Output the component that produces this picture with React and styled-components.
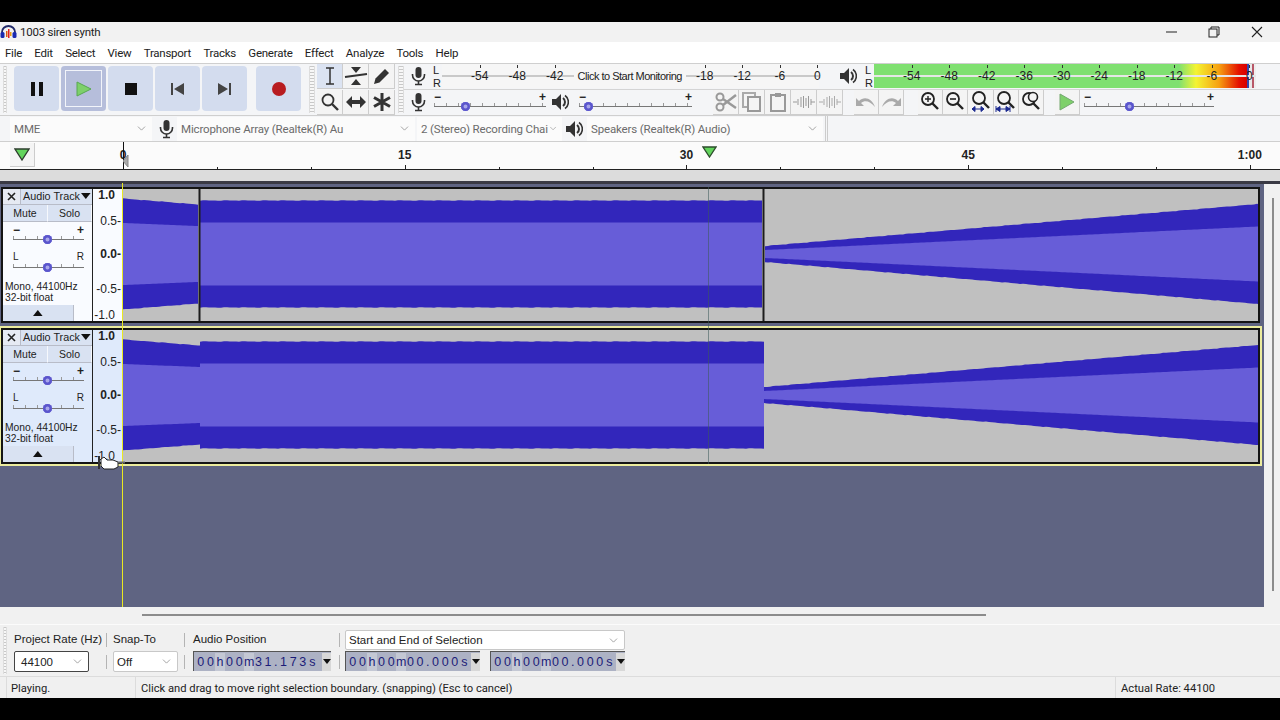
import React from "react";
import styled, { createGlobalStyle } from "styled-components";
import { ChevronDown } from "lucide-react";

const GlobalStyle = createGlobalStyle`
  html, body {
    margin: 0;
    padding: 0;
    background: #000;
  }
  * {
    box-sizing: border-box;
  }
`;

const Page = styled.div`
  width: 1280px;
  height: 720px;
  padding: 22px 0;
  background: #000;
  display: flex;
  flex-direction: column;
  overflow: hidden;
  font-family: "Liberation Sans", Arial, sans-serif;
  font-size: 12px;
  color: #222;
`;

const TitleBar = styled.div`
  height: 20px;
  flex: none;
  display: flex;
  align-items: center;
  background: #f2f2f2;
  font-family: Roboto, sans-serif;
  font-size: 11.5px;
  letter-spacing: -0.25px;
`;

const TitleText = styled.span`
  margin-left: 3px;
  flex: 1;
`;

const WinButton = styled.div`
  width: 16px;
  height: 16px;
  margin-right: 27px;
  display: flex;
  align-items: center;
  justify-content: center;
  &:last-child {
    margin-right: 15px;
  }
`;

const MenuBar = styled.div`
  height: 21px;
  flex: none;
  display: flex;
  align-items: center;
  gap: 12.3px;
  padding-left: 5px;
  background: #fff;
  font-family: Roboto, sans-serif;
  font-size: 11.5px;
  letter-spacing: -0.25px;
`;

const ToolBlock = styled.div`
  height: 53px;
  flex: none;
  display: flex;
  background: #f4f5f7;
  border-top: 1px solid #cfcfcf;
  border-bottom: 1px solid #cfcfcf;
`;

const Grip = styled.div`
  width: ${(p) => p.$w || 7}px;
  flex: none;
  margin: ${(p) => p.$m || "2px 2px 2px 3px"};
  background: repeating-linear-gradient(to bottom, #c8c8c8 0 1px, #f7f7f7 1px 3px);
  border-left: 1px solid #ddd;
  border-right: 1px solid #ddd;
`;

const Transport = styled.div`
  display: flex;
  align-items: center;
  gap: 2px;
  width: 296px;
  flex: none;
  padding: 0 0 2px 5px;
`;

const TransportButton = styled.div`
  width: 45px;
  height: 45px;
  flex: none;
  border-radius: 4px;
  display: flex;
  align-items: center;
  justify-content: center;
  background: ${(p) => (p.$down ? "#b6bedb" : "#d3dcee")};
  margin-left: ${(p) => p.$gap || 0}px;
  box-shadow: ${(p) => (p.$down ? "inset 0 0 0 4px #b6bedb, inset 0 0 0 5px #f2f4fa" : "none")};
`;

const ToolGrid = styled.div`
  width: 78px;
  flex: none;
  display: grid;
  grid-template-columns: repeat(3, 26px);
  grid-auto-rows: 25px;
  row-gap: 1px;
  align-content: center;
`;

const ToolButton = styled.div`
  height: 25px;
  width: ${(p) => p.$w || 26}px;
  flex: none;
  display: flex;
  align-items: center;
  justify-content: center;
  background: ${(p) => (p.$on ? "#dbe3f2" : "#f4f4f4")};
  border-right: 1px solid #cdcdcd;
  border-bottom: 1px solid #cdcdcd;
  margin-left: ${(p) => p.$gap || 0}px;
`;

const ToolRows = styled.div`
  flex: 1;
  display: flex;
  flex-direction: column;
`;

const ToolRow = styled.div`
  height: 25.5px;
  display: flex;
  align-items: center;
  &:first-child {
    border-bottom: 1px solid #d4d4d4;
  }
`;

const MicSlot = styled.div`
  width: ${(p) => p.$w || 28}px;
  flex: none;
  display: flex;
  align-items: center;
  justify-content: center;
`;

const LeftRight = styled.div`
  width: 10px;
  height: 25px;
  flex: none;
  display: flex;
  flex-direction: column;
  justify-content: space-between;
  font-size: 11px;
  line-height: 12px;
  padding-left: 1px;
`;

const Scale = styled.div`
  height: 24px;
  flex: none;
  width: ${(p) => p.$w}px;
  display: flex;
  padding-left: 19px;
  background: ${(p) =>
    p.$live
      ? `linear-gradient(to bottom, transparent 11px, #e6e6e6 11px, #e6e6e6 13px, transparent 13px),
         linear-gradient(to right, #7fe070 0, #7fe070 305px, #f4f432 322px, #f6a010 345px, #e41000 365px, #d80000 373px, #3048b0 373px, #3048b0 375px, #e8e8e8 375px, #e8e8e8 378px, #b85868 378px, #b85868 380px, #eee 380px)`
      : "linear-gradient(to bottom, #f6f6f6 11px, #c9c9c9 11px, #c9c9c9 13px, #f6f6f6 13px)"};
`;

const ScaleCell = styled.div`
  width: 37.5px;
  flex: none;
  text-align: center;
  line-height: 24px;
  font-size: 12px;
  color: #222;
  position: relative;
  &::before {
    content: "";
    position: absolute;
    left: 50%;
    top: 1px;
    width: 1px;
    height: 3px;
    background: #333;
  }
`;

const ScaleMessage = styled.div`
  width: 112.5px;
  flex: none;
  text-align: center;
  line-height: 24px;
  font-size: 11px;
  letter-spacing: -0.5px;
  background: linear-gradient(to bottom, transparent 6px, #f6f6f6 6px, #f6f6f6 18px, transparent 18px);
  white-space: nowrap;
`;

const SliderBox = styled.div`
  width: ${(p) => p.$w}px;
  height: 24px;
  flex: none;
  position: relative;
  margin-left: ${(p) => p.$gap || 0}px;
`;

const SliderSign = styled.span`
  position: absolute;
  top: 0;
  font-size: 12px;
  font-weight: bold;
  line-height: 14px;
  ${(p) => (p.$right ? "right: 0;" : "left: 0;")}
`;

const SliderTrack = styled.div`
  position: absolute;
  left: 0;
  right: 0;
  top: ${(p) => p.$top ?? 13}px;
  height: 4px;
  border-bottom: 1px solid #777;
  background: repeating-linear-gradient(to right, #999 0 1px, transparent 1px 12px);
`;

const SliderThumb = styled.div`
  position: absolute;
  left: ${(p) => p.$at}px;
  top: ${(p) => p.$top ?? 12}px;
  width: 9px;
  height: 9px;
  border-radius: 50%;
  background: #5a55cc;
  box-shadow: inset 0 0 0 2.5px #5a55cc, inset 0 0 0 5px #a8a6ea;
`;

const DeviceBar = styled.div`
  height: 26px;
  flex: none;
  display: flex;
  align-items: center;
  background: #f4f5f7;
  border-bottom: 1px solid #cfcfcf;
`;

const Combo = styled.div`
  width: ${(p) => p.$w}px;
  flex: none;
  height: 24px;
  margin-left: ${(p) => p.$gap || 0}px;
  padding: 0 4px 0 4px;
  display: flex;
  align-items: center;
  justify-content: space-between;
  background: #fbfbfb;
  color: #6b6b6b;
  font-family: Roboto, sans-serif;
  font-size: 11.5px;
  letter-spacing: -0.15px;
  white-space: nowrap;
  overflow: hidden;
`;

const DeviceEnd = styled.div`
  width: 3px;
  height: 25px;
  margin-left: 2px;
  border-left: 1px solid #ccc;
  border-right: 1px solid #ccc;
`;

const TimelineBar = styled.div`
  height: 28px;
  flex: none;
  display: flex;
  background: #fbfbfb;
  border-bottom: 1px solid #222;
`;

const TimelineLeft = styled.div`
  width: 123px;
  flex: none;
  padding: 1px 0 0 10px;
`;

const LoopButton = styled.div`
  width: 25px;
  height: 24px;
  display: flex;
  align-items: center;
  justify-content: center;
  background: #f4f4f4;
  border-right: 1px solid #ccc;
  border-bottom: 1px solid #ccc;
`;

const Ruler = styled.div`
  flex: 1;
  display: flex;
  position: relative;
`;

const RulerCell = styled.div`
  width: 93.92px;
  flex: none;
  position: relative;
  &::after {
    content: "";
    position: absolute;
    left: 0;
    bottom: 0;
    width: 1px;
    height: ${(p) => (p.$major ? 4 : 2)}px;
    background: #222;
  }
`;

const RulerLabel = styled.span`
  position: absolute;
  left: -14px;
  width: 28px;
  top: 6px;
  text-align: center;
  font-weight: bold;
  font-size: 12px;
  color: #222;
`;

const PlayHead = styled.div`
  position: absolute;
  left: 0;
  top: 0;
  bottom: 0;
  width: 1px;
  background: #111;
`;

const HeadMark = styled.svg`
  position: absolute;
  left: 0;
  top: 12px;
`;

const EdgeMark = styled.svg`
  position: absolute;
  left: 579px;
  top: 4px;
`;

const ShelfGap = styled.div`
  height: 11px;
  flex: none;
  background: #dcdcdc;
`;

const ShelfEdge = styled.div`
  height: 3px;
  flex: none;
  background: #3a3a44;
`;

const TrackZone = styled.div`
  height: 423px;
  flex: none;
  display: flex;
`;

const TrackColumn = styled.div`
  width: 1264px;
  flex: none;
  padding: 3px 0 0 1px;
  background: #5f6482;
  position: relative;
`;

const TrackRow = styled.div`
  width: 1259px;
  height: 136px;
  display: flex;
  border: 2px solid #141414;
  margin-bottom: 5px;
  box-shadow: ${(p) => (p.$focus ? "0 0 0 2px #ecec9e" : "none")};
  background: ${(p) => (p.$focus ? "#dfeafb" : "#f9fbff")};
`;

const TrackPanel = styled.div`
  width: 90px;
  flex: none;
  border-right: 1px solid #222;
  display: flex;
  flex-direction: column;
`;

const PanelHead = styled.div`
  height: 16px;
  flex: none;
  display: flex;
`;

const CloseBox = styled.div`
  width: 18px;
  flex: none;
  display: flex;
  align-items: center;
  justify-content: center;
  background: #e6eaf3;
  border-right: 1px solid #b8bcc8;
  border-bottom: 1px solid #b8bcc8;
`;

const NameBox = styled.div`
  flex: 1;
  display: flex;
  align-items: center;
  justify-content: space-between;
  padding: 0 1px 2px 2px;
  font-size: 10.8px;
  background: #d9e2f2;
  border-bottom: 1px solid #b8bcc8;
  white-space: nowrap;
`;

const MuteRow = styled.div`
  height: 17px;
  flex: none;
  display: flex;
`;

const MuteButton = styled.div`
  width: ${(p) => p.$w}px;
  flex: none;
  display: flex;
  align-items: center;
  justify-content: center;
  font-size: 10.5px;
  background: #d9e2f2;
  border-right: 1px solid #f6f8fc;
  border-bottom: 1px solid #b8bcc8;
`;

const PanelSlider = styled.div`
  height: 28px;
  flex: none;
  margin-left: 10px;
  margin-top: ${(p) => p.$top || 0}px;
`;

const PanSide = styled.div`
  display: flex;
  justify-content: space-between;
  font-size: 10px;
  line-height: 12px;
  width: 71px;
`;

const InfoText = styled.div`
  margin: 2px 0 0 2px;
  font-size: 10.3px;
  line-height: 11px;
  white-space: nowrap;
`;

const CollapseButton = styled.div`
  width: 71px;
  height: 16px;
  margin-top: auto;
  display: flex;
  align-items: center;
  justify-content: center;
  background: #d9e2f2;
  border-right: 1px solid #b8bcc8;
`;

const VRuler = styled.div`
  width: 30px;
  flex: none;
  display: flex;
  flex-direction: column;
  align-items: flex-end;
  padding-right: 1px;
  border-right: 1px solid #222;
`;

const VLabel = styled.div`
  height: 14px;
  flex: none;
  margin-top: ${(p) => p.$gap}px;
  line-height: 14px;
  font-size: 12px;
  font-weight: ${(p) => (p.$bold ? "bold" : "normal")};
  padding-right: ${(p) => (p.$tick ? 0 : 6)}px;
  color: #222;
`;

const WaveArea = styled.div`
  flex: 1;
  position: relative;
  background: #c0c0c0;
  overflow: hidden;
`;

const WaveSvg = styled.svg`
  display: block;
`;

const InsertLine = styled.div`
  position: absolute;
  left: 122px;
  top: -1px;
  width: 1px;
  height: 424px;
  background: #e9e920;
  z-index: 2;
`;

const CursorLine = styled.div`
  position: absolute;
  left: 708px;
  top: 3px;
  width: 1px;
  height: 277px;
  background: rgba(60, 90, 90, 0.55);
  z-index: 2;
`;

const HandCursor = styled.svg`
  position: absolute;
  left: 98px;
  top: 272px;
  z-index: 3;
`;

const VScroll = styled.div`
  flex: 1;
  background: #f1f1f1;
  padding: 14px 0 0 8px;
`;

const VThumb = styled.div`
  width: 2px;
  height: 393px;
  background: #8c8c8c;
`;

const HScroll = styled.div`
  height: 17px;
  flex: none;
  background: #f1f1f1;
  padding: 7px 0 0 142px;
`;

const HThumb = styled.div`
  width: 844px;
  height: 2px;
  background: #8c8c8c;
`;

const SelectionBar = styled.div`
  height: 52px;
  flex: none;
  display: flex;
  background: #f0f0f0;
  border-top: 1px solid #fbfbfb;
`;

const Field = styled.div`
  width: ${(p) => p.$w}px;
  flex: none;
  display: flex;
  flex-direction: column;
  gap: 1px;
  padding-top: 5px;
  margin-left: ${(p) => p.$gap || 0}px;
`;

const FieldLabel = styled.div`
  height: 20px;
  line-height: 19px;
  font-size: 11.5px;
  white-space: nowrap;
`;

const SepStack = styled.div`
  width: 1px;
  flex: none;
  margin-left: ${(p) => p.$gap}px;
  padding-top: 8px;
  display: flex;
  flex-direction: column;
  gap: 8px;
`;

const SepLine = styled.div`
  height: 14px;
  background: #b4b4b4;
`;

const SelectBox = styled.div`
  width: ${(p) => p.$w}px;
  height: ${(p) => p.$h || 21}px;
  display: flex;
  align-items: center;
  justify-content: space-between;
  padding: 0 4px 0 ${(p) => p.$pad || 3}px;
  background: #fff;
  border: 1px solid ${(p) => p.$line || "#c8c8c8"};
  border-radius: 2px;
  font-size: 11.5px;
  white-space: nowrap;
`;

const TimeRow = styled.div`
  display: flex;
  gap: 10px;
`;

const TimeBox = styled.div`
  width: ${(p) => p.$w}px;
  height: 20px;
  display: flex;
  align-items: center;
  background: #adb2c4;
  border-top: 1px solid #555;
  border-left: 1px solid #555;
  padding-left: 2px;
  color: #1c1c78;
  font-size: 12.5px;
`;

const TimeChar = styled.span`
  width: ${(p) => p.$w}px;
  flex: none;
  height: 18px;
  line-height: 18px;
  text-align: center;
  background: ${(p) => (p.$unit ? "#c4c8d4" : "#adb2c4")};
`;

const TimeArrow = styled.div`
  width: 9px;
  height: 18px;
  flex: none;
  margin-left: auto;
  display: flex;
  align-items: center;
  justify-content: center;
  background: #d8d8d8;
  &::after {
    content: "";
    border-left: 4px solid transparent;
    border-right: 4px solid transparent;
    border-top: 5px solid #111;
  }
`;

const StatusBar = styled.div`
  height: 22px;
  flex: none;
  display: flex;
  align-items: center;
  background: #f0f0f0;
  border-top: 1px solid #dcdcdc;
  font-family: Roboto, sans-serif;
  font-size: 11.2px;
  color: #222;
`;

const StatusCell = styled.div`
  width: ${(p) => p.$w}px;
  flex: none;
  height: 100%;
  display: flex;
  align-items: center;
  padding: 1px 0 0 ${(p) => p.$pad || 4}px;
  border-left: 1px solid #dcdcdc;
  margin-left: ${(p) => p.$gap || 0}px;
`;

/* drawings */

const Logo = () => (
  <svg width="17" height="14" viewBox="0 0 17 14">
    <path d="M2 10 V7 a6.5 6 0 0 1 13 0 V10" fill="none" stroke="#222a6a" strokeWidth="1.8" />
    <rect x="0.5" y="7" width="4" height="6" rx="1.5" fill="#1a2ab0" />
    <rect x="12.5" y="7" width="4" height="6" rx="1.5" fill="#1a2ab0" />
    <rect x="6" y="6" width="1.5" height="6" fill="#e06010" />
    <rect x="8" y="4" width="1.5" height="9" fill="#e02020" />
    <rect x="10" y="7" width="1.5" height="4" fill="#e8a010" />
  </svg>
);

const Mic = ({ color = "#333" }) => (
  <svg width="15" height="20" viewBox="0 0 15 20">
    <rect x="4.5" y="1" width="6" height="11" rx="3" fill={color} />
    <path d="M1.5 8 v1 a6 6 0 0 0 12 0 v-1" fill="none" stroke={color} strokeWidth="1.6" />
    <path d="M7.5 15 v3 M4 18.5 h7" stroke={color} strokeWidth="1.6" />
  </svg>
);

const Speaker = () => (
  <svg width="18" height="18" viewBox="0 0 18 18">
    <path d="M1 6 h4 l5 -5 v16 l-5 -5 h-4 z" fill="#333" />
    <path d="M12 5 a5 5 0 0 1 0 8" fill="none" stroke="#333" strokeWidth="2" />
    <path d="M14 2.5 a8 8 0 0 1 0 13" fill="none" stroke="#333" strokeWidth="1.6" />
  </svg>
);

const SmallChevron = () => <ChevronDown size={13} color="#8a8a8a" strokeWidth={1.4} />;

const Magnifier = ({ children, dy = 0 }) => (
  <svg width="24" height="22" viewBox="0 0 24 22">
    <circle cx="10" cy={8 + dy} r="6" fill="none" stroke="#222" strokeWidth="1.8" />
    <path d={`M14.5 ${12.5 + dy} L20 ${18 + dy}`} stroke="#222" strokeWidth="2.4" />
    {children}
  </svg>
);

const WavyIcon = ({ color }) => (
  <svg width="22" height="16" viewBox="0 0 22 16">
    <path d="M0 8 h4 M18 8 h4" stroke={color} strokeWidth="1.2" />
    <path d="M5 5 v6 M8 3 v10 M10.5 2 v12 M13 4 v8 M15.5 2 v12 M18 5 v6" stroke={color} strokeWidth="1" fill="none" />
  </svg>
);

const Triangle = ({ size = 8, flip, color = "#111" }) => (
  <svg width={size * 1.6} height={size} viewBox="0 0 16 10">
    <path d={flip ? "M0 0 H16 L8 10 Z" : "M0 10 H16 L8 0 Z"} fill={color} />
  </svg>
);

const Slider = ({ width, thumb, gap }) => (
  <SliderBox $w={width} $gap={gap}>
    <SliderSign>−</SliderSign>
    <SliderSign $right>+</SliderSign>
    <SliderTrack />
    <SliderThumb $at={thumb} />
  </SliderBox>
);

const DARK = "#3226bb";
const LIGHT = "#675dd8";

// fixed little wobble so the envelope edges look sampled, not ruled
const wobble = (i) => ((i * 7919) % 13) / 13 - 0.5;

const edge = (x0, x1, h0, h1, sign, rough) => {
  const pts = [];
  for (let x = x0, i = 0; x <= x1; x += 3, i++) {
    const h = h0 + ((h1 - h0) * (x - x0)) / (x1 - x0);
    pts.push(`${x},${65 + sign * h + (rough ? wobble(i + x0) * 0.5 : 0)}`);
  }
  const last = `${x1},${65 + sign * h1}`;
  return [...pts, last];
};

// [x0, x1, peakAt0, rmsAt0, peakAt1, rmsAt1] half heights around the centre line
const segmentsFor = (joined) => [
  [0, joined ? 77 : 75, 55.5, 31, 49.5, 28],
  [77, joined ? 641 : 639, 53.5, 31.5, 53.5, 31.5],
  [joined ? 641 : 642, 1135, 8, 4, 50, 27.5],
];

const Waveform = ({ separators }) => (
  <WaveSvg width="1135" height="132" viewBox="0 0 1135 132">
    {segmentsFor(!separators).map(([x0, x1, p0, r0, p1, r1]) => (
      <g key={x0}>
        <polygon
          fill={DARK}
          points={[...edge(x0, x1, p0, p1, -1, true), ...edge(x0, x1, p0, p1, 1, true).reverse()].join(" ")}
        />
        <polygon
          fill={LIGHT}
          points={[...edge(x0, x1, r0, r1, -1, false), ...edge(x0, x1, r0, r1, 1, false).reverse()].join(" ")}
        />
      </g>
    ))}
    {separators && <path d="M76.5 0 V132 M640.5 0 V132" stroke="#1c1c1c" strokeWidth="2" />}
  </WaveSvg>
);

const PanTrack = styled.div`
  position: relative;
  height: 14px;
  width: 71px;
`;

const Track = ({ focus }) => (
  <TrackRow $focus={focus}>
    <TrackPanel>
      <PanelHead>
        <CloseBox>
          <svg width="9" height="9" viewBox="0 0 9 9">
            <path d="M1 1 L8 8 M8 1 L1 8" stroke="#222" strokeWidth="1.6" />
          </svg>
        </CloseBox>
        <NameBox>
          Audio Track
          <Triangle size={6} flip />
        </NameBox>
      </PanelHead>
      <MuteRow>
        <MuteButton $w={45}>Mute</MuteButton>
        <MuteButton $w={44}>Solo</MuteButton>
      </MuteRow>
      <PanelSlider $top={1}>
        <Slider width={71} thumb={30} />
      </PanelSlider>
      <PanelSlider>
        <PanSide>
          <span>L</span>
          <span>R</span>
        </PanSide>
        <PanTrack>
          <SliderTrack $top={1} />
          <SliderThumb $at={30} $top={0} />
        </PanTrack>
      </PanelSlider>
      <InfoText>
        Mono, 44100Hz
        <br />
        32-bit float
      </InfoText>
      <CollapseButton>
        <Triangle size={6} />
      </CollapseButton>
    </TrackPanel>
    <VRuler>
      <VLabel $gap={-1} $bold>1.0</VLabel>
      <VLabel $gap={12} $tick>0.5-</VLabel>
      <VLabel $gap={19} $tick $bold>0.0-</VLabel>
      <VLabel $gap={21} $tick>-0.5-</VLabel>
      <VLabel $gap={12}>-1.0</VLabel>
    </VRuler>
    <WaveArea>
      <Waveform separators={!focus} />
    </WaveArea>
  </TrackRow>
);

const TimeValue = ({ text, width }) => (
  <TimeBox $w={width}>
    {text.split("").map((c, i) => (
      <TimeChar key={i} $w={c === "." ? 6 : 9.6} $unit={"hm".includes(c)}>
        {c}
      </TimeChar>
    ))}
    <TimeArrow />
  </TimeBox>
);

const recordLabels = ["-54", "-48", "-42"];
const recordLabelsEnd = ["-18", "-12", "-6", "0"];
const playLabels = ["-54", "-48", "-42", "-36", "-30", "-24", "-18", "-12", "-6", "0"];
const rulerLabels = { 0: "0", 3: "15", 6: "30", 9: "45", 12: "1:00" };

export default function App() {
  return (
    <Page>
      <GlobalStyle />
      <TitleBar>
        <Logo />
        <TitleText>1003 siren synth</TitleText>
        <WinButton>
          <svg width="11" height="2" viewBox="0 0 11 2">
            <path d="M0 1 H11" stroke="#222" />
          </svg>
        </WinButton>
        <WinButton>
          <svg width="12" height="12" viewBox="0 0 12 12">
            <rect x="1" y="3" width="8" height="8" fill="none" stroke="#222" />
            <path d="M3 3 V1 H11 V9 H9" fill="none" stroke="#222" />
          </svg>
        </WinButton>
        <WinButton>
          <svg width="12" height="12" viewBox="0 0 12 12">
            <path d="M1 1 L11 11 M11 1 L1 11" stroke="#222" strokeWidth="1.1" />
          </svg>
        </WinButton>
      </TitleBar>

      <MenuBar>
        {["File", "Edit", "Select", "View", "Transport", "Tracks", "Generate", "Effect", "Analyze", "Tools", "Help"].map((m) => (
          <span key={m}>{m}</span>
        ))}
      </MenuBar>

      <ToolBlock>
        <Grip $m="2px 2px 2px 3px" $w={4} />
        <Transport>
          <TransportButton>
            <svg width="14" height="14" viewBox="0 0 14 14">
              <path d="M1 0 H5 V14 H1 Z M9 0 H13 V14 H9 Z" fill="#111" />
            </svg>
          </TransportButton>
          <TransportButton $down>
            <svg width="16" height="16" viewBox="0 0 16 16">
              <path d="M1 1 L15 8 L1 15 Z" fill="#7ed06a" stroke="#58a850" />
            </svg>
          </TransportButton>
          <TransportButton>
            <svg width="12" height="12" viewBox="0 0 12 12">
              <rect width="12" height="12" fill="#111" />
            </svg>
          </TransportButton>
          <TransportButton>
            <svg width="13" height="12" viewBox="0 0 13 12">
              <path d="M0 0 H2 V12 H0 Z M13 0 V12 L3 6 Z" fill="#444" />
            </svg>
          </TransportButton>
          <TransportButton>
            <svg width="13" height="12" viewBox="0 0 13 12">
              <path d="M0 0 L10 6 L0 12 Z M11 0 H13 V12 H11 Z" fill="#444" />
            </svg>
          </TransportButton>
          <TransportButton $gap={7}>
            <svg width="14" height="14" viewBox="0 0 14 14">
              <circle cx="7" cy="7" r="7" fill="#b81c20" />
            </svg>
          </TransportButton>
        </Transport>
        <Grip $w={6} $m="2px 2px 2px 4px" />
        <ToolGrid>
          <ToolButton $on>
            <svg width="12" height="18" viewBox="0 0 12 18">
              <path d="M2 1 H10 M6 1 V17 M2 17 H10" stroke="#333" strokeWidth="1.5" fill="none" />
            </svg>
          </ToolButton>
          <ToolButton>
            <svg width="24" height="20" viewBox="0 0 24 20">
              <path d="M7 1 H17 L12 7 Z M7 19 H17 L12 13 Z" fill="#333" />
              <path d="M1 11 L23 8" stroke="#333" strokeWidth="2" />
            </svg>
          </ToolButton>
          <ToolButton>
            <svg width="18" height="18" viewBox="0 0 18 18">
              <path d="M1 17 L2.5 11.5 L12 2 L16 6 L6.5 15.5 Z" fill="#333" />
            </svg>
          </ToolButton>
          <ToolButton>
            <svg width="20" height="20" viewBox="0 0 20 20">
              <circle cx="8" cy="8" r="5.5" fill="none" stroke="#333" strokeWidth="1.8" />
              <path d="M12 12 L18 18" stroke="#333" strokeWidth="2.4" />
            </svg>
          </ToolButton>
          <ToolButton>
            <svg width="20" height="12" viewBox="0 0 20 12">
              <path d="M0 6 L6 0 V4 H14 V0 L20 6 L14 12 V8 H6 V12 Z" fill="#333" />
            </svg>
          </ToolButton>
          <ToolButton>
            <svg width="18" height="18" viewBox="0 0 18 18">
              <path d="M9 0 V18 M1 4.5 L17 13.5 M17 4.5 L1 13.5" stroke="#333" strokeWidth="3" />
            </svg>
          </ToolButton>
        </ToolGrid>
        <Grip $w={6} $m="2px 0 2px 3px" />
        <ToolRows>
          <ToolRow>
            <MicSlot>
              <Mic />
            </MicSlot>
            <LeftRight>
              <span>L</span>
              <span>R</span>
            </LeftRight>
            <Scale $w={377}>
              {recordLabels.map((l) => (
                <ScaleCell key={l}>{l}</ScaleCell>
              ))}
              <ScaleMessage>Click to Start Monitoring</ScaleMessage>
              {recordLabelsEnd.map((l) => (
                <ScaleCell key={l}>{l}</ScaleCell>
              ))}
            </Scale>
            <Grip $w={6} $m="1px 0 1px 6px" />
            <MicSlot $w={33}>
              <Speaker />
            </MicSlot>
            <LeftRight>
              <span>L</span>
              <span>R</span>
            </LeftRight>
            <Scale $w={382} $live>
              {playLabels.map((l) => (
                <ScaleCell key={l}>{l}</ScaleCell>
              ))}
            </Scale>
          </ToolRow>
          <ToolRow>
            <MicSlot>
              <Mic />
            </MicSlot>
            <Slider width={112} thumb={27} gap={2} />
            <MicSlot>
              <Speaker />
            </MicSlot>
            <Slider width={113} thumb={5} gap={5} />
            <Grip $w={6} $m="1px 0 1px 13px" />
            <ToolButton $gap={2}>
              <svg width="22" height="20" viewBox="0 0 22 20">
                <circle cx="5" cy="5" r="3.5" fill="none" stroke="#999" strokeWidth="2" />
                <circle cx="5" cy="15" r="3.5" fill="none" stroke="#999" strokeWidth="2" />
                <path d="M8 7 L21 16 M8 13 L21 3" stroke="#999" strokeWidth="2.4" />
              </svg>
            </ToolButton>
            <ToolButton>
              <svg width="20" height="20" viewBox="0 0 20 20">
                <rect x="1" y="1" width="12" height="14" fill="none" stroke="#aaa" strokeWidth="2" />
                <rect x="6" y="5" width="12" height="14" fill="#f4f4f4" stroke="#999" strokeWidth="2" />
              </svg>
            </ToolButton>
            <ToolButton>
              <svg width="18" height="20" viewBox="0 0 18 20">
                <rect x="2" y="3" width="14" height="16" fill="none" stroke="#999" strokeWidth="2" />
                <rect x="6" y="1" width="6" height="4" fill="#999" />
              </svg>
            </ToolButton>
            <ToolButton>
              <WavyIcon color="#999" />
            </ToolButton>
            <ToolButton>
              <WavyIcon color="#aaa" />
            </ToolButton>
            <ToolButton $gap={11} $w={25}>
              <svg width="22" height="14" viewBox="0 0 22 14">
                <path d="M1 3 V11 H9 L6 8 C10 5 15 6 20 12 C17 3 9 1 4 6 Z" fill="#aaa" />
              </svg>
            </ToolButton>
            <ToolButton $w={25}>
              <svg width="22" height="14" viewBox="0 0 22 14">
                <path d="M21 3 V11 H13 L16 8 C12 5 7 6 2 12 C5 3 13 1 18 6 Z" fill="#aaa" />
              </svg>
            </ToolButton>
            <ToolButton $gap={14} $w={25}>
              <Magnifier>
                <path d="M7 8 H13 M10 5 V11" stroke="#222" strokeWidth="1.4" />
              </Magnifier>
            </ToolButton>
            <ToolButton $w={25}>
              <Magnifier>
                <path d="M7 8 H13" stroke="#222" strokeWidth="1.6" />
              </Magnifier>
            </ToolButton>
            <ToolButton $w={26}>
              <Magnifier dy={-1}>
                <path d="M3 18 H15 M3 18 l3 -2.5 v5 z M15 18 l-3 -2.5 v5 z" stroke="#1c2a90" fill="#1c2a90" strokeWidth="1" />
              </Magnifier>
            </ToolButton>
            <ToolButton $w={25}>
              <Magnifier dy={-1}>
                <path d="M2 15 V21 M16 15 V21 M2 18 H16 M2 18 l4 -2.5 v5 z M16 18 l-4 -2.5 v5 z" stroke="#1c2a90" fill="#1c2a90" strokeWidth="1" />
              </Magnifier>
            </ToolButton>
            <ToolButton $w={25}>
              <Magnifier>
                <circle cx="14" cy="6" r="4.5" fill="#f4f4f4" stroke="#222" strokeWidth="1.6" />
              </Magnifier>
            </ToolButton>
            <Grip $w={6} $m="1px 0 1px 1px" />
            <ToolButton $gap={4} $w={25}>
              <svg width="16" height="18" viewBox="0 0 16 18">
                <path d="M1 1 L15 9 L1 17 Z" fill="#7ed06a" stroke="#74a870" />
              </svg>
            </ToolButton>
            <Slider width={130} thumb={41} gap={4} />
          </ToolRow>
        </ToolRows>
      </ToolBlock>

      <DeviceBar>
        <Grip $w={4} $m="2px 2px 2px 3px" />
        <Combo $w={142} $gap={1}>
          MME
          <SmallChevron />
        </Combo>
        <MicSlot>
          <Mic />
        </MicSlot>
        <Combo $w={238} $gap={-3}>
          Microphone Array (Realtek(R) Au
          <SmallChevron />
        </Combo>
        <Combo $w={145} $gap={2}>
          2 (Stereo) Recording Chai
          <SmallChevron />
        </Combo>
        <MicSlot $w={24}>
          <Speaker />
        </MicSlot>
        <Combo $w={236} $gap={1}>
          Speakers (Realtek(R) Audio)
          <SmallChevron />
        </Combo>
        <DeviceEnd />
      </DeviceBar>

      <TimelineBar>
        <TimelineLeft>
          <LoopButton>
            <svg width="16" height="13" viewBox="0 0 16 13">
              <path d="M1 1 H15 L8 12 Z" fill="#62d45c" stroke="#2c3c2c" strokeWidth="1.3" />
            </svg>
          </LoopButton>
        </TimelineLeft>
        <Ruler>
          {Array.from({ length: 13 }, (_, i) => (
            <RulerCell key={i} $major={i in rulerLabels}>
              {rulerLabels[i] && <RulerLabel>{rulerLabels[i]}</RulerLabel>}
            </RulerCell>
          ))}
          <PlayHead />
          <HeadMark width="6" height="14" viewBox="0 0 6 14">
            <path d="M0 7 L5 1 V13 Z" fill="#a8a8a8" stroke="#888" />
          </HeadMark>
          <EdgeMark width="15" height="12" viewBox="0 0 15 12">
            <path d="M1 1 H14 L7.5 11 Z" fill="#62d45c" stroke="#2c4c2c" strokeWidth="1.3" />
          </EdgeMark>
        </Ruler>
      </TimelineBar>
      <ShelfGap />
      <ShelfEdge />

      <TrackZone>
        <TrackColumn>
          <Track />
          <Track focus />
          <InsertLine />
          <CursorLine />
          <HandCursor width="28" height="14" viewBox="0 0 28 14">
            <path d="M1 0 V13" stroke="#333" strokeWidth="2" />
            <path d="M3 3 L6 1 L9 4 H15 L20 6 V11 L16 13 H6 L3 10 Z" fill="#fff" stroke="#222" strokeWidth="1" />
            <path d="M20 6.5 H27" stroke="#666" strokeWidth="2" />
          </HandCursor>
        </TrackColumn>
        <VScroll>
          <VThumb />
        </VScroll>
      </TrackZone>

      <HScroll>
        <HThumb />
      </HScroll>

      <SelectionBar>
        <Grip $w={4} $m="2px 7px 2px 3px" />
        <Field $w={92}>
          <FieldLabel>Project Rate (Hz)</FieldLabel>
          <SelectBox $w={75} $line="#444" $pad={6}>
            44100
            <SmallChevron />
          </SelectBox>
        </Field>
        <SepStack $gap={0}>
          <SepLine />
          <SepLine />
        </SepStack>
        <Field $w={71} $gap={6}>
          <FieldLabel>Snap-To</FieldLabel>
          <SelectBox $w={65}>
            Off
            <SmallChevron />
          </SelectBox>
        </Field>
        <SepStack $gap={0}>
          <SepLine />
          <SepLine />
        </SepStack>
        <Field $w={146} $gap={8}>
          <FieldLabel>Audio Position</FieldLabel>
          <TimeValue text="00h00m31.173s" width={138} />
        </Field>
        <SepStack $gap={0}>
          <SepLine />
          <SepLine />
        </SepStack>
        <Field $w={280} $gap={5}>
          <SelectBox $w={280} $h={20}>
            Start and End of Selection
            <SmallChevron />
          </SelectBox>
          <TimeRow>
            <TimeValue text="00h00m00.000s" width={135} />
            <TimeValue text="00h00m00.000s" width={135} />
          </TimeRow>
        </Field>
      </SelectionBar>

      <StatusBar>
        <StatusCell $w={129} $gap={6}>Playing.</StatusCell>
        <StatusCell $w={980} $pad={5}>Click and drag to move right selection boundary. (snapping) (Esc to cancel)</StatusCell>
        <StatusCell $w={160} $pad={5}>Actual Rate: 44100</StatusCell>
      </StatusBar>
    </Page>
  );
}
